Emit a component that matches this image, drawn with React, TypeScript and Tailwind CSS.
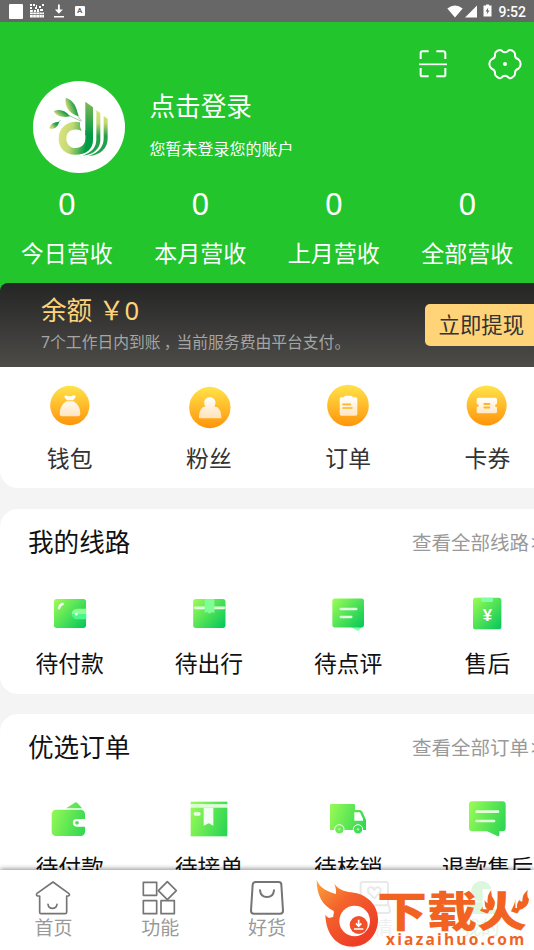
import React from "react";

type Entry = {
  label: string;
  icon: React.ReactNode;
};

const stats = [
  { label: "今日营收", value: 0 },
  { label: "本月营收", value: 0 },
  { label: "上月营收", value: 0 },
  { label: "全部营收", value: 0 },
];

// All green icons share a 144 unit canvas
function GreenIcon({ id, children }: { id: string; children: React.ReactNode }) {
  return (
    <svg viewBox="0 0 144 144" className="w-12 h-12" fill={`url(#${id})`}>
      <defs>
        <linearGradient id={id} gradientUnits="userSpaceOnUse" x1="20" y1="25" x2="120" y2="115">
          <stop offset="0" stopColor="#a3ff55" />
          <stop offset="1" stopColor="#00c65a" />
        </linearGradient>
      </defs>
      {children}
    </svg>
  );
}

function LimeIcon({ id, children }: { id: string; children: React.ReactNode }) {
  return (
    <svg viewBox="0 0 144 144" className="w-12 h-12" fill={`url(#${id})`}>
      <defs>
        <linearGradient id={id} gradientUnits="userSpaceOnUse" x1="15" y1="50" x2="128" y2="90">
          <stop offset="0" stopColor="#94f956" />
          <stop offset="1" stopColor="#2dd653" />
        </linearGradient>
      </defs>
      {children}
    </svg>
  );
}

function GoldIcon({ id, cx, cy, r, children }: { id: string; cx: number; cy: number; r: number; children: React.ReactNode }) {
  return (
    <svg viewBox="0 0 126 126" className="w-[42px] h-[42px] overflow-visible">
      <defs>
        <linearGradient id={id} x1="0" y1="0" x2="0" y2="1">
          <stop offset="0" stopColor="#ffe34a" />
          <stop offset="1" stopColor="#ff940a" />
        </linearGradient>
        <linearGradient id={`${id}-in`} gradientUnits="userSpaceOnUse" x1="0" y1="35" x2="0" y2="100">
          <stop offset="0" stopColor="#ffffff" />
          <stop offset="1" stopColor="#ffe3b8" />
        </linearGradient>
      </defs>
      <circle cx={cx} cy={cy} r={r} fill={`url(#${id})`} />
      <g fill={`url(#${id}-in)`}>{children}</g>
    </svg>
  );
}

const shortcuts: Entry[] = [
  {
    label: "钱包",
    icon: (
      <GoldIcon id="gold-bag" cx={62.5} cy={61.5} r={59}>
        <path d="M46 34Q48 30 54 32Q62 35 70 32Q78 28 80 34Q80 40 72 46H54Q47 41 46 34Z" />
        <path d="M52 49H74Q94 62 94 87Q94 94 87 94H39Q32 94 32 87Q32 62 52 49Z" />
      </GoldIcon>
    ),
  },
  {
    label: "粉丝",
    icon: (
      <GoldIcon id="gold-fans" cx={65.5} cy={67.5} r={62}>
        <circle cx="65.5" cy="53" r="17" />
        <path d="M33 100V94Q33 68 54 64Q66 72 78 64Q100 68 100 94V100Z" />
      </GoldIcon>
    ),
  },
  {
    label: "订单",
    icon: (
      <GoldIcon id="gold-order" cx={63} cy={61.5} r={62.5}>
        <path d="M42 37H50Q52 32 56 32H72Q76 32 78 37H86Q91 37 91 42V87Q91 92 86 92H43Q38 92 38 87V42Q38 37 42 37Z" />
        <path d="M48 58H70M48 69H75" stroke="#ffb327" strokeWidth="5" strokeLinecap="round" />
      </GoldIcon>
    ),
  },
  {
    label: "卡券",
    icon: (
      <GoldIcon id="gold-card" cx={62} cy={61.5} r={60}>
        <path d="M37 38H88Q93 38 93 43V57Q87 58 87 62Q87 66 93 67V80Q93 85 88 85H37Q32 85 32 80V67Q38 66 38 62Q38 58 32 57V43Q32 38 37 38Z" />
        <path d="M55 57H70M55 67.500H70" stroke="#ffb327" strokeWidth="5.500" strokeLinecap="round" />
      </GoldIcon>
    ),
  },
];

const routes: Entry[] = [
  {
    label: "待付款",
    icon: (
      <GreenIcon id="route-pay">
        <rect x="24" y="27" width="96" height="87" rx="8" />
        <path d="M121 56H93A16 16 0 0 0 77 72H121Z" fill="#8cff93" />
        <path d="M77 72A16 16 0 0 0 93 88H121V72Z" fill="#4bf78c" />
        <circle cx="91" cy="72" r="4.5" fill="#fff" />
        <path d="M39 55Q41 44 50 42" fill="none" stroke="#fff" strokeWidth="7" strokeLinecap="round" />
      </GreenIcon>
    ),
  },
  {
    label: "待出行",
    icon: (
      <GreenIcon id="route-trip">
        <rect x="24.5" y="27" width="97" height="87" rx="8" />
        <path d="M31 53.500H117" stroke="#e3ffe0" strokeWidth="8" strokeLinecap="round" />
        <path d="M59 27H88V69L81 66L74 71L66 66L59 69Z" fill="#7dff96" />
      </GreenIcon>
    ),
  },
  {
    label: "待点评",
    icon: (
      <GreenIcon id="route-review">
        <path d="M80 111H114L103 122Q100 123 97 120Z" fill="#7dffab" />
        <rect x="25" y="25.500" width="95" height="87" rx="8" />
        <path d="M50 57H97M50 81H82" stroke="#dcffe0" strokeWidth="7" strokeLinecap="round" />
      </GreenIcon>
    ),
  },
  {
    label: "售后",
    icon: (
      <GreenIcon id="route-after">
        <rect x="30" y="23" width="85" height="95" rx="8" />
        <path d="M54 23H90V31Q90 36 85 36H59Q54 36 54 31Z" fill="#7dffa4" />
        <text x="73" y="92" textAnchor="middle" fill="#fff" fontSize="50" fontWeight="700" className="font-['Liberation_Sans',sans-serif]">¥</text>
      </GreenIcon>
    ),
  },
];

const orders: Entry[] = [
  {
    label: "待付款",
    icon: (
      <LimeIcon id="order-pay">
        <path d="M60 37Q75 27 86 20Q90 17 94 21L107 35V37Z" />
        <rect x="17" y="41" width="100" height="79" rx="13" />
        <path d="M120 69H92A11.500 11.500 0 0 0 92 92H120Z" fill="#fff" />
        <circle cx="93" cy="80.500" r="5.500" />
      </LimeIcon>
    ),
  },
  {
    label: "待接单",
    icon: (
      <LimeIcon id="order-accept">
        <rect x="17" y="17" width="110" height="8" />
        <rect x="17" y="25" width="110" height="10" fill="#dcffd9" />
        <rect x="17" y="35" width="110" height="86" />
        <rect x="26" y="48" width="21" height="11" rx="5" fill="#e9ffe4" />
        <path d="M56 35H85V89L71 82L56 89Z" fill="#f2fff0" />
      </LimeIcon>
    ),
  },
  {
    label: "待核销",
    icon: (
      <LimeIcon id="order-verify">
        <path d="M22 24H89Q93 24 93 28V42H108Q112 42 115 47L124 67Q126 70 126 74V102H18V28Q18 24 22 24Z" />
        <path d="M91 49H106Q108 49 110 53L117 69V74H91Z" fill="#fff" />
        <circle cx="46" cy="100" r="14" stroke="#fff" strokeWidth="3" />
        <circle cx="102" cy="100" r="14" stroke="#fff" strokeWidth="3" />
        <circle cx="46" cy="100" r="4" fill="#a2f29b" />
        <circle cx="102" cy="100" r="4" fill="#a2f29b" />
      </LimeIcon>
    ),
  },
  {
    label: "退款售后",
    icon: (
      <LimeIcon id="order-refund">
        <path d="M28 16H118Q128 16 128 26V96Q128 106 118 106H109V117Q109 123 103 120L72 106H28Q18 106 18 96V26Q18 16 28 16Z" />
        <path d="M41 47H105M41 75H93" stroke="#e0ffdc" strokeWidth="8" strokeLinecap="round" />
      </LimeIcon>
    ),
  },
];

function StatusBar() {
  return (
    <div className="h-[22px] bg-[#676767] flex items-center justify-between pl-[9px] pr-[8px] text-white shrink-0">
      <div className="flex items-center">
        <div className="w-[14px] h-[15px] rounded-[1px] bg-white" />
        <svg viewBox="0 0 14 14" className="w-[14px] h-[14px] ml-[7px]" fill="#fff">
          <path d="M0 0h2v2h-2zM3 0h2v2h-2zM6 1h1v2h-1zM12 0h2v2h-2zM0 3h2v2h-2zM5 3h2v2h-2zM9 2h2v2h-2zM0 6h3v2h-3zM4 6h2v2h-2zM7 5h2v3h-2zM10 5h3v2h-3zM0 8.500h14v1.800h-14zM0 11h14v2.600h-14z" />
          <path d="M3 5v9M6.200 7v7M9.500 7v7M12 8v6" stroke="#8d8d8d" strokeWidth="0.500" />
        </svg>
        <svg viewBox="0 0 12 14" className="w-[12px] h-[14px] ml-[9px]" fill="#fff">
          <path d="M5 0.500h1.800v5h3.100l-4 4.200l-4-4.200h3.100zM1 12h10v1.400h-10z" />
        </svg>
        <div className="w-[9.500px] h-[10.500px] ml-[10px] rounded-[1px] bg-white text-[#676767] text-[8px] leading-[10px] font-bold text-center font-['Roboto',sans-serif]">A</div>
      </div>
      <div className="flex items-center">
        <svg viewBox="0 0 16 13" className="w-[16px] h-[13px]" fill="#fff">
          <path d="M8 12.500L0.300 3.500Q8-2.500 15.700 3.500Z" />
        </svg>
        <svg viewBox="0 0 13 13" className="w-[13px] h-[13px] ml-[1px]" fill="#fff">
          <path d="M13 0.500V12.500H1Z" />
        </svg>
        <svg viewBox="0 0 9 13" className="w-[9px] h-[13px] ml-[6px] mb-px">
          <path d="M3 0.500h3v1h2.500v11h-8v-11H3z" fill="#fff" />
          <path d="M5.300 3.500L2.500 7.500H4.300L3.700 10.500L6.500 6.500H4.800Z" fill="#676767" />
        </svg>
        <span className="ml-[6px] pt-[2px] text-[14px] leading-none font-medium font-['Roboto',sans-serif]">9:52</span>
      </div>
    </div>
  );
}

function Avatar() {
  return (
    <div className="w-[92px] h-[92px] rounded-full bg-white overflow-hidden shrink-0">
      <svg viewBox="9 3 276 276" className="w-full h-full">
        <defs>
          <linearGradient id="logo-d" gradientUnits="userSpaceOnUse" x1="88" y1="160" x2="188" y2="175">
            <stop offset="0" stopColor="#d9e37c" />
            <stop offset="0.350" stopColor="#c3d973" />
            <stop offset="0.850" stopColor="#009a44" />
          </linearGradient>
          <linearGradient id="logo-top" gradientUnits="userSpaceOnUse" x1="0" y1="65" x2="0" y2="165">
            <stop offset="0" stopColor="#7fb958" />
            <stop offset="1" stopColor="#009a44" />
          </linearGradient>
          <linearGradient id="logo-bar" gradientUnits="userSpaceOnUse" x1="0" y1="90" x2="0" y2="220">
            <stop offset="0" stopColor="#dce681" />
            <stop offset="0.300" stopColor="#c3d973" />
            <stop offset="0.600" stopColor="#23a04b" />
            <stop offset="1" stopColor="#23a04b" />
          </linearGradient>
          <linearGradient id="logo-leaf" x1="0" y1="1" x2="1" y2="0.500">
            <stop offset="0.300" stopColor="#c5d874" />
            <stop offset="0.800" stopColor="#219c48" />
          </linearGradient>
        </defs>
        <path fill="url(#logo-d)" d="M166 150L189 150V180C189 207 170 224 135 224C105 224 86 203 86 176C86 145 108 125 138 125L150 127Q148 140 155 153C135 143 109 150 109 176C109 192 121 204 137 204C156 204 166 192 166 175Z" />
        <path fill="url(#logo-top)" d="M166 65L189 82V166H166Z" />
        <path fill="url(#logo-bar)" d="M199 91L211 99V180C211 205 192 224 158 227C186 217 199 202 199 178Z" />
        <path fill="url(#logo-bar)" d="M221 108L233 116V175C233 205 212 226 176 228C207 218 221 200 221 175Z" />
        <g fill="url(#logo-leaf)">
          <path d="M107 53C133 62 138 80 146 109C118 100 103 82 107 53Z" />
          <path d="M71 94C88 86 106 91 120 109C100 114 80 110 71 94Z" />
          <path d="M58 145C62 130 72 126 88 125C84 140 72 150 58 145Z" />
        </g>
        <path d="M118 107L152 123M136 93Q144 112 155 124M85 126L92 121" fill="none" stroke="#36a44f" strokeWidth="1.500" />
      </svg>
    </div>
  );
}

function EntryGrid({ items, labelClass }: { items: Entry[]; labelClass: string }) {
  return (
    <div className="grid grid-cols-4 w-[557px]">
      {items.map((item) => (
        <div key={item.label} className="flex flex-col items-center">
          {item.icon}
          <span className={`text-[22.800px] leading-8 whitespace-nowrap ${labelClass}`}>{item.label}</span>
        </div>
      ))}
    </div>
  );
}

function SectionTitle({ title, more }: { title: string; more: string }) {
  return (
    <div className="flex items-center w-[557px] h-10 pl-[28px]">
      <h2 className="text-[25.600px] leading-10 text-[#111]">{title}</h2>
      <span className="ml-auto w-[145px] text-[19.500px] text-[#999] whitespace-nowrap">
        {more}
        <span className="ml-[2px]">&gt;</span>
      </span>
    </div>
  );
}

function TabBar() {
  return (
    <nav className="relative z-10 h-20 shrink-0 bg-white grid grid-cols-5 pt-[10px] shadow-[0_-1px_5px_rgba(0,0,0,0.45)] text-[19px] leading-6 text-[#999]">
      <div className="flex flex-col items-center">
        <svg viewBox="0 0 108 108" className="w-9 h-9" fill="none" stroke="#757575" strokeWidth="5" strokeLinejoin="round" strokeLinecap="round">
          <path d="M54 6L6 40Q2 47 8 48H14V97Q14 101 18 101H90Q95 101 95 97V48H100Q106 46 102 41Z" />
          <path d="M39 73Q41 85 52 85Q64 85 66 73" />
        </svg>
        <span>首页</span>
      </div>
      <div className="flex flex-col items-center">
        <svg viewBox="0 0 108 108" className="w-9 h-9" fill="none" stroke="#757575" strokeWidth="5" strokeLinejoin="round">
          <rect x="4" y="7" width="40" height="39" />
          <path d="M76 5L103 32L76 59L49 32Z" />
          <rect x="4" y="62" width="40" height="39" />
          <rect x="57" y="62" width="40" height="39" />
        </svg>
        <span>功能</span>
      </div>
      <div className="flex flex-col items-center">
        <svg viewBox="0 0 108 108" className="w-9 h-9" fill="none" stroke="#757575" strokeWidth="6" strokeLinejoin="round" strokeLinecap="round">
          <path d="M20 6H89Q97 6 97 14L102 92Q102 101 93 101H15Q6 101 6 92L11 14Q12 6 20 6Z" />
          <path d="M33 31Q35 51 54 51Q73 51 75 31" />
        </svg>
        <span>好货</span>
      </div>
      <div className="flex flex-col items-center opacity-15">
        <svg viewBox="0 0 108 108" className="w-9 h-9" fill="none" stroke="#757575" strokeWidth="6" strokeLinejoin="round">
          <rect x="14" y="6" width="82" height="70" rx="6" />
          <path d="M55 55L37 37Q33 24 44 22Q51 21 55 30Q59 21 67 22Q77 25 72 37Z" />
          <path d="M14 70L8 92Q8 99 16 99H94Q102 99 102 92L96 70" />
        </svg>
        <span>心情</span>
      </div>
      <div className="flex flex-col items-center opacity-15 text-[#22c52c]">
        <svg viewBox="0 0 108 108" className="w-9 h-9" fill="#22c52c">
          <circle cx="55" cy="34" r="31" />
          <path d="M12 102Q12 70 40 66H70Q98 70 98 102Z" />
        </svg>
        <span>我的</span>
      </div>
    </nav>
  );
}

function Watermark() {
  return (
    <div className="absolute z-20 right-0 bottom-0 w-[220px] h-[84px] flex text-[#f26322]">
      <svg viewBox="0 0 192 252" className="w-16 h-[84px] shrink-0">
        <defs>
          <linearGradient id="flame" x1="0" y1="0" x2="0.700" y2="0.900">
            <stop offset="0" stopColor="#fba43a" />
            <stop offset="0.450" stopColor="#f4642c" />
            <stop offset="1" stopColor="#ee3e26" />
          </linearGradient>
        </defs>
        <path fill="url(#flame)" d="M8 42C18 66 38 76 66 84C67 73 65 64 61 54C74 70 88 76 112 79C158 84 192 116 192 160C192 207 160 242 116 242C70 242 36 208 34 146C40 156 48 158 58 152C58 142 62 138 58 134C25 119 8 86 8 42Z" />
        <circle cx="122" cy="165" r="46" fill="#fff" />
        <circle cx="134" cy="177" r="27" fill="#f0512a" />
        <path d="M134 161V178M126 172L134 181L142 172M120 189H148" fill="none" stroke="#fff" strokeWidth="5" />
      </svg>
      <div className="relative flex flex-col font-['Noto_Sans_CJK_SC',sans-serif] font-black">
        <span className="block -ml-px mt-[22px] text-[50px] leading-[50px] whitespace-nowrap origin-top scale-y-[0.84]">下载火</span>
        <span className="block -mt-[9px] ml-[8px] text-[15.500px] leading-5 tracking-[2.200px] whitespace-nowrap font-bold font-['Open_Sans',sans-serif]">xiazaihuo.com</span>
        <svg viewBox="0 0 144 90" className="absolute left-[104px] top-[22px] w-12 h-[30px]">
          <path fill="#fff" d="M2 4H44V64H2ZM100 4H144V60H100Z" />
          <path fill="#f26322" d="M8 36Q12 46 17 44Q14 22 28 6Q26 24 35 34Q44 46 32 66Q6 72 8 36ZM112 36Q118 42 121 40Q120 18 138 6Q132 22 141 34Q140 60 110 66Q98 54 112 36Z" />
        </svg>
      </div>
    </div>
  );
}

export default function App() {
  return (
    <div className="relative w-[534px] h-[950px] flex flex-col overflow-hidden bg-[#f4f4f4] font-['Noto_Sans','Noto_Sans_CJK_SC',sans-serif]">
      <StatusBar />

      <main className="flex-1 min-h-0 overflow-hidden">
        {/* Profile header */}
        <header className="h-[345px] bg-[#22c52c] text-white pt-[26px]">
          <div className="flex items-center justify-end h-8 pr-[12px] gap-[40px]">
            <svg viewBox="0 0 90 90" className="w-[30px] h-[30px]" fill="none" stroke="#fff" strokeWidth="6">
              <path d="M8 30V12Q8 7 13 7H32M55 7H75Q82 7 82 14V30M8 57V77Q8 82 13 82H32M55 82H77Q82 82 82 77V57" />
              <path d="M3 46H87" strokeWidth="5" />
            </svg>
            <svg viewBox="662 141 102 102" className="w-[34px] h-[34px]" fill="none" stroke="#fff" strokeWidth="6" strokeLinejoin="round">
              <path d="M713 157Q719 157 724 151Q728 148 735 152Q744 157 743 163Q742 175 753 178Q760 184 760 192Q760 200 753 206Q742 209 743 221Q744 227 735 232Q728 237 724 233Q719 227 713 227Q707 227 702 233Q698 237 691 232Q682 227 683 221Q684 209 673 206Q666 200 666 192Q666 184 673 178Q684 175 683 163Q682 157 691 152Q698 148 702 151Q707 157 713 157Z" />
              <circle cx="713" cy="192" r="6" fill="#fff" stroke="none" />
            </svg>
          </div>

          <div className="flex mt-px pl-[33px]">
            <Avatar />
            <div className="ml-[24.500px] pt-[8px]">
              <div className="text-[25.600px] leading-9">点击登录</div>
              <div className="mt-3 text-[16px] leading-6">您暂未登录您的账户</div>
            </div>
          </div>

          <div className="grid grid-cols-4 mt-[10px] text-center">
            {stats.map((s) => (
              <div key={s.label}>
                <div className="text-[31px] leading-10">{s.value}</div>
                <div className="mt-[14px] text-[23px] leading-8">{s.label}</div>
              </div>
            ))}
          </div>

          {/* Balance */}
          <div className="mt-[14px] w-[557px] h-[84px] rounded-t-[8px] bg-linear-to-b from-[#252525] to-[#4d4c49] flex pl-[41px]">
            <div className="pt-[10px] whitespace-nowrap">
              <div className="text-[25.600px] leading-9 text-[#ffd478]">余额 ￥0</div>
              <div className="mt-[1px] text-[15.800px] leading-6 text-[#a5a5a5]">
                7个工作日内到账<span className="pl-[3px] -mr-[3px]">，</span>当前服务费由平台支付。
              </div>
            </div>
            <button className="ml-auto mt-[21px] w-[132px] h-[42px] shrink-0 rounded-[5px] bg-[#ffd478] pl-[13.500px] pt-px text-left text-[21.400px] text-[#333]">立即提现</button>
          </div>
        </header>

        {/* Shortcuts */}
        <section className="h-[121px] bg-white rounded-bl-[18px] pt-[17.500px] overflow-hidden">
          <EntryGrid items={shortcuts} labelClass="mt-[16.500px] text-[#333]" />
        </section>

        <section className="mt-[21px] h-[185px] bg-white rounded-l-[18px] pt-[14px] overflow-hidden">
          <SectionTitle title="我的线路" more="查看全部线路" />
          <div className="mt-[27px]">
            <EntryGrid items={routes} labelClass="mt-[10px] text-[#111]" />
          </div>
        </section>

        <section className="mt-5 h-[185px] bg-white rounded-l-[18px] pt-[14px] overflow-hidden">
          <SectionTitle title="优选订单" more="查看全部订单" />
          <div className="mt-[28px]">
            <EntryGrid items={orders} labelClass="mt-[8px] text-[#111]" />
          </div>
        </section>
      </main>

      <TabBar />
      <Watermark />
    </div>
  );
}
